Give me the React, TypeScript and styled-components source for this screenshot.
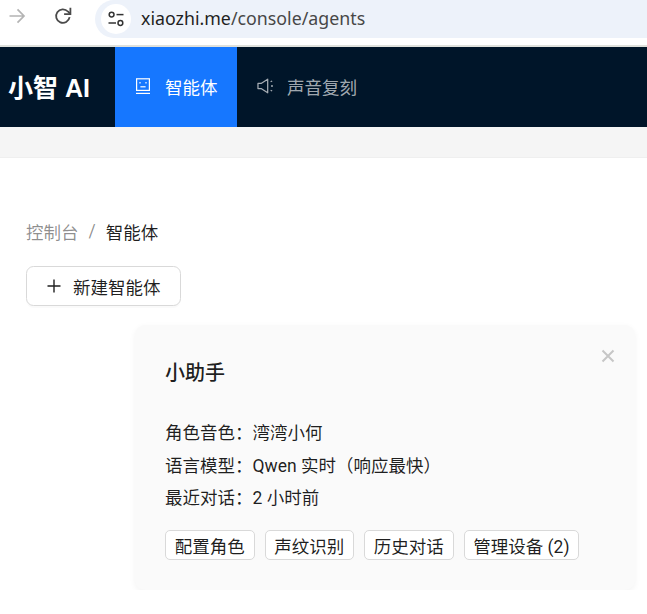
import React from "react";
import styled, { createGlobalStyle } from "styled-components";

const GlobalStyle = createGlobalStyle`
  * { box-sizing: border-box; }
  html, body { margin: 0; padding: 0; background: #fff; }
  body {
    font-family: Roboto, "Noto Sans CJK SC", sans-serif;
    font-size: 17.5px;
    color: rgba(0, 0, 0, 0.88);
    overflow: hidden;
  }
`;

const tabs = [
  { label: "智能体", active: true, icon: <BotIcon /> },
  { label: "声音复刻", active: false, icon: <SoundIcon /> },
];

const rows = [
  { label: "角色音色", value: "湾湾小何" },
  { label: "语言模型", value: "Qwen 实时（响应最快）" },
  { label: "最近对话", value: "2 小时前" },
];

const actions = ["配置角色", "声纹识别", "历史对话", "管理设备 (2)"];

function BotIcon() {
  return (
    <svg width="16" height="17" viewBox="0 0 16 17" fill="none" stroke="currentColor" strokeWidth="1.2">
      <rect x="1.6" y="0.8" width="12.8" height="11.6" />
      <path d="M1 15.4h14" />
      <path d="M5 4v1.6M11 4v1.6" />
      <path d="M5.4 8.8h5.2" />
    </svg>
  );
}

function SoundIcon() {
  return (
    <svg width="18" height="16" viewBox="0 0 18 16" fill="none" stroke="currentColor" strokeWidth="1.3">
      <path d="M1 5.4h3.2L11 1v14L4.2 10.6H1z" strokeLinejoin="round" />
      <path d="M14 3.6l1.6-.8M14.4 8h2M14 12.4l1.6.8" />
    </svg>
  );
}

const App: React.FC = () => {
  return (
    <>
      <GlobalStyle />
      <BrowserBar>
        <NavButton $after={26}>
          <svg width="20" height="20" viewBox="0 0 20 20" fill="none" stroke="#b4b4b4" strokeWidth="1.7">
            <path d="M2.5 10h14.5M10.5 3.4L17 10l-6.5 6.6" />
          </svg>
        </NavButton>
        <NavButton $after={22}>
          <svg width="20" height="20" viewBox="0 0 20 20" fill="none" stroke="#4a4a4a" strokeWidth="1.8">
            <path d="M16.6 11.2a6.8 6.8 0 1 1-1.7-5.7L17 7.6" />
            <path d="M17.4 1.8v6.3h-6.3" />
          </svg>
        </NavButton>
        <AddressPill>
          <TuneBadge>
            <svg width="16" height="16" viewBox="0 0 16 16" fill="none" stroke="#333" strokeWidth="1.5">
              <circle cx="3.6" cy="3.6" r="2.4" />
              <path d="M8.5 3.6h7" />
              <circle cx="12.4" cy="12" r="2.4" />
              <path d="M0.5 12h7.5" />
            </svg>
          </TuneBadge>
          <Url>
            xiaozhi.me<UrlPath>/console/agents</UrlPath>
          </Url>
        </AddressPill>
      </BrowserBar>

      <Header>
        <Logo>小智 AI</Logo>
        {tabs.map((tab) => (
          <Tab key={tab.label} $active={tab.active}>
            <TabIcon>{tab.icon}</TabIcon>
            {tab.label}
          </Tab>
        ))}
      </Header>
      <SubBand />

      <Main>
        <Breadcrumb>
          <CrumbLink>控制台</CrumbLink>
          <CrumbSep>/</CrumbSep>
          <span>智能体</span>
        </Breadcrumb>

        <NewButton type="button">
          <svg width="16" height="16" viewBox="0 0 16 16" fill="none" stroke="currentColor" strokeWidth="1.4">
            <path d="M8 1.5v13M1.5 8h13" />
          </svg>
          新建智能体
        </NewButton>

        <Card>
          <CloseButton>
            <svg width="14" height="14" viewBox="0 0 14 14" fill="none" stroke="#c6c6c6" strokeWidth="2">
              <path d="M1.5 1.5l11 11M12.5 1.5l-11 11" />
            </svg>
          </CloseButton>
          <CardTitle>小助手</CardTitle>
          <InfoList>
            {rows.map((row) => (
              <InfoRow key={row.label}>
                {row.label}：{row.value}
              </InfoRow>
            ))}
          </InfoList>
          <Actions>
            {actions.map((action) => (
              <ActionButton key={action} type="button">
                {action}
              </ActionButton>
            ))}
          </Actions>
        </Card>
      </Main>
    </>
  );
};

export default App;

const BrowserBar = styled.div`
  height: 45px;
  padding-left: 7px;
  display: flex;
  align-items: flex-start;
  background: #fff;
`;

const NavButton = styled.div<{ $after: number }>`
  width: 20px;
  height: 20px;
  margin: 6px ${(p) => p.$after}px 0 0;
  display: flex;
  align-items: center;
  justify-content: center;
`;

const AddressPill = styled.div`
  flex: 1;
  height: 38px;
  display: flex;
  align-items: center;
  padding-left: 6px;
  background: #edf2fa;
  border-radius: 19px 0 0 19px;
`;

const TuneBadge = styled.div`
  width: 30px;
  height: 30px;
  border-radius: 50%;
  background: #fff;
  display: flex;
  align-items: center;
  justify-content: center;
  margin-right: 10px;
`;

const Url = styled.div`
  padding-bottom: 3px;
  font-family: "Noto Sans", sans-serif;
  font-size: 17.8px;
  color: #1f1f1f;
`;

const UrlPath = styled.span`
  color: #474747;
`;

const Header = styled.header`
  height: 82px;
  border-top: 2px solid #dfe1dc;
  background: #001529;
  display: flex;
  align-items: stretch;
`;

const Logo = styled.div`
  width: 115px;
  padding: 0 0 2px 8px;
  display: flex;
  align-items: center;
  font-family: "Liberation Sans", "Noto Sans CJK SC", sans-serif;
  font-size: 25px;
  font-weight: 700;
  color: #fff;
`;

const Tab = styled.div<{ $active: boolean }>`
  display: flex;
  align-items: center;
  width: ${(p) => (p.$active ? "122px" : "auto")};
  padding: 0 20px 2px;
  background: ${(p) => (p.$active ? "#1677ff" : "transparent")};
  color: ${(p) => (p.$active ? "#fff" : "rgba(255, 255, 255, 0.65)")};
  white-space: nowrap;
`;

const TabIcon = styled.span`
  display: flex;
  flex: none;
  width: 17.5px;
  margin-right: 12.5px;
`;

const SubBand = styled.div`
  height: 31px;
  background: #f5f5f5;
  border-bottom: 1px solid #efefef;
`;

const Main = styled.main`
  padding: 61px 12px 0 26px;
`;

const Breadcrumb = styled.div`
  display: flex;
  align-items: center;
  height: 24px;
  color: rgba(0, 0, 0, 0.88);
`;

const CrumbLink = styled.span`
  color: rgba(0, 0, 0, 0.45);
`;

const CrumbSep = styled.span`
  margin: 0 10px;
  color: rgba(0, 0, 0, 0.45);
`;

const NewButton = styled.button`
  display: flex;
  align-items: center;
  gap: 11px;
  width: 155px;
  height: 40px;
  margin-top: 23px;
  padding: 0 0 0 19px;
  background: #fff;
  border: 1px solid #d9d9d9;
  border-radius: 7.5px;
  box-shadow: 0 2px 0 rgba(0, 0, 0, 0.02);
  font: inherit;
  color: rgba(0, 0, 0, 0.88);
`;

const Card = styled.section`
  position: relative;
  width: 500px;
  height: 265px;
  margin: 19px 0 0 109px;
  padding: 31px 30px 30px;
  background: #fafafa;
  border-radius: 10px;
  box-shadow: 0 2px 6px rgba(0, 0, 0, 0.05);
`;

const CloseButton = styled.div`
  position: absolute;
  top: 24px;
  right: 20px;
  width: 14px;
  height: 14px;
  display: flex;
`;

const CardTitle = styled.h3`
  margin: 0;
  height: 34px;
  line-height: 34px;
  font-size: 20px;
  font-weight: 500;
`;

const InfoList = styled.div`
  margin-top: 27px;
`;

const InfoRow = styled.div`
  height: 32.5px;
  line-height: 32.5px;
  white-space: nowrap;
`;

const Actions = styled.div`
  display: flex;
  gap: 10px;
  margin-top: 15.5px;
`;

const ActionButton = styled.button`
  height: 30px;
  padding: 0 8.75px;
  background: #fff;
  border: 1px solid #d9d9d9;
  border-radius: 5px;
  font: inherit;
  color: rgba(0, 0, 0, 0.88);
  white-space: nowrap;
`;
